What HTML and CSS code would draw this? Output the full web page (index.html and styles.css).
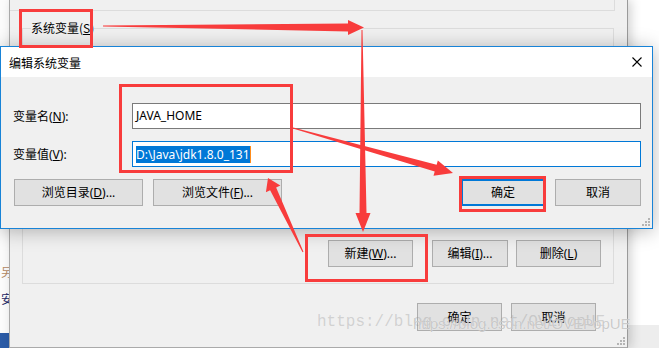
FILE: index.html
```html
<!DOCTYPE html>
<html lang="zh-CN">
<head>
    <meta charset="UTF-8">
    <meta name="viewport" content="width=device-width, initial-scale=1.0">
    <title>编辑系统变量</title>
    <link rel="stylesheet" href="styles.css">
</head>
<body>

    <!-- janela atrás, à esquerda (só um pedaço aparece) -->
    <div class="desk-left">
        <span class="peek peek-orange">另</span>
        <span class="peek peek-navy">安</span>
        <span class="taskbar"></span>
    </div>
    <div class="desk-corner"></div>

    <!-- janela "环境变量" -->
    <div class="env-window">
        <div class="group-upper"></div>
        <div class="group-system">
            <span class="group-title">系统变量(<u>S</u>)</span>
            <div class="btn-row group-buttons">
                <button class="btn btn-new">新建(<u>W</u>)...</button>
                <button class="btn btn-edit">编辑(<u>I</u>)...</button>
                <button class="btn btn-del">删除(<u>L</u>)</button>
            </div>
        </div>
        <div class="btn-row footer-buttons">
            <button class="btn btn-footer">确定</button>
            <button class="btn btn-footer">取消</button>
        </div>
        <svg class="grip grip-env" width="8" height="8" viewBox="0 0 8 8">
            <rect x="6" y="0" width="2" height="2"/>
            <rect x="3" y="3" width="2" height="2"/><rect x="6" y="3" width="2" height="2"/>
            <rect x="0" y="6" width="2" height="2"/><rect x="3" y="6" width="2" height="2"/><rect x="6" y="6" width="2" height="2"/>
        </svg>
    </div>

    <!-- diálogo da frente -->
    <div class="dialog">
        <div class="titlebar">
            <span class="title">编辑系统变量</span>
            <span class="close-btn">
                <svg width="10" height="10" viewBox="0 0 10 10">
                    <path d="M0.5 0.5 L9.5 9.5 M9.5 0.5 L0.5 9.5" stroke="#000" stroke-width="1.1" fill="none"/>
                </svg>
            </span>
        </div>
        <div class="dialog-body">
            <div class="field-row">
                <label for="nome">变量名(<u>N</u>):</label>
                <div class="input" id="nome">JAVA_HOME</div>
            </div>
            <div class="field-row">
                <label for="valor">变量值(<u>V</u>):</label>
                <div class="input input-focus" id="valor"><span class="selected">D:\Java\jdk1.8.0_131</span><span class="caret"></span></div>
            </div>
            <div class="btn-row dialog-buttons">
                <button class="btn btn-browse">浏览目录(<u>D</u>)...</button>
                <button class="btn btn-browse">浏览文件(<u>F</u>)...</button>
                <span class="spacer"></span>
                <button class="btn btn-ok">确定</button>
                <button class="btn btn-cancel">取消</button>
            </div>
        </div>
        <svg class="grip grip-dialog" width="8" height="8" viewBox="0 0 8 8">
            <rect x="6" y="0" width="2" height="2"/>
            <rect x="3" y="3" width="2" height="2"/><rect x="6" y="3" width="2" height="2"/>
            <rect x="0" y="6" width="2" height="2"/><rect x="3" y="6" width="2" height="2"/><rect x="6" y="6" width="2" height="2"/>
        </svg>
    </div>

    <!-- marca d'água -->
    <div class="watermark wm-mono">https://blog.csdn.net/OVEPopUE</div>
    <div class="watermark wm-sans">https://blog.csdn.net/OVEPopUE</div>

    <!-- anotações em vermelho -->
    <svg class="marks" width="659" height="348" viewBox="0 0 659 348">
        <rect class="mark-box" x="20.5" y="10.5" width="71" height="36"/>
        <rect class="mark-box" x="120.5" y="85.5" width="171" height="86"/>
        <rect class="mark-box" x="460.5" y="177.5" width="84" height="33"/>
        <rect class="mark-box" x="306.5" y="235.5" width="120" height="45"/>
        <polygon class="mark-arrow" points="103,25.5 348,23.5 348,20 364,27.5 348,35 348,31.5 103,26.5"/>
        <polygon class="mark-arrow" points="361.5,30 359.5,213 355.5,213 363,232 370.5,213 366.5,213 362.5,30"/>
        <polygon class="mark-arrow" points="293.14,127.52 436.62,164.76 437.84,160.43 453,173 433.5,175.83 434.72,171.5 292.86,128.48"/>
        <polygon class="mark-arrow" points="303.45,251.79 276.14,187.57 280.36,185.43 268,178 265.9,192.27 270.12,190.13 302.55,252.21"/>
    </svg>

</body>
</html>
```

FILE: styles.css
```css
body {
    font-family: "Noto Sans", "Noto Sans CJK SC", sans-serif;
    font-size: 12px;
    color: #000;
    background-color: #fff;
    margin: 0;
    width: 659px;
    height: 348px;
    position: relative;
    overflow: hidden;
}
u {
    text-decoration: underline;
    text-underline-offset: 1px;
}
/* Pedaço da janela de trás */
.desk-left {
    position: absolute;
    left: 0;
    top: 0;
    width: 9px;
    height: 348px;
    overflow: hidden;
    background-color: #fbfbfb;
    display: flex;
    flex-direction: column;
    padding-top: 265px;
    box-sizing: border-box;
}
.peek {
    display: block;
    font-family: "Noto Sans CJK SC", sans-serif;
    line-height: 14px;
    margin-left: 1px;
    white-space: nowrap;
}
.peek-orange {
    color: #b58a66;
}
.peek-navy {
    color: #1c2766;
    margin-top: 13px;
}
.taskbar {
    margin-top: auto;
    height: 15px;
    background-color: #2b5ba6;
}
.desk-corner {
    position: absolute;
    left: 627px;
    top: 325px;
    width: 32px;
    height: 23px;
    background-color: #ededed;
}
/* Janela de variáveis de ambiente */
.env-window {
    position: absolute;
    left: 9px;
    top: 0;
    width: 619px;
    height: 348px;
    box-sizing: border-box;
    background-color: #f0f0f0;
    border-left: 1px solid #a9a9a9;
    border-right: 1px solid #9a9a9a;
    border-bottom: 1px solid #aaa;
    box-shadow: 3px 0 10px rgba(0,0,0,0.18);
}
.group-upper {
    width: 604px;
    height: 10px;
    border-right: 1px solid #dcdcdc;
    border-bottom: 1px solid #dcdcdc;
}
.group-system {
    margin: 17px 0 0 12px;
    width: 592px;
    box-sizing: border-box;
    border: 1px solid #dcdcdc;
    padding: 0 12px 16px 0;
}
.group-title {
    display: block;
    width: max-content;
    margin: -9px 0 0 8px;
    line-height: 16px;
    background-color: #f0f0f0;
    font-family: "Noto Sans CJK SC", sans-serif;
}
.btn-row {
    display: flex;
    align-items: center;
}
.group-buttons {
    justify-content: flex-end;
    margin-top: 204px;
}
.btn {
    font-family: "Noto Sans", "Noto Sans CJK SC", sans-serif;
    font-size: 12px;
    height: 27px;
    padding: 0;
    background-color: #e1e1e1;
    border: 1px solid #adadad;
    color: #000;
    box-sizing: border-box;
    line-height: 25px;
}
.btn-new {
    width: 85px;
    margin-right: 19px;
}
.btn-edit {
    width: 76px;
    margin-right: 8px;
}
.btn-del {
    width: 85px;
}
.footer-buttons {
    justify-content: flex-end;
    margin-top: 19px;
    padding-right: 31px;
    gap: 9px;
}
.btn-footer {
    width: 85px;
    height: 28px;
}
.grip {
    position: absolute;
    fill: #b4b4b4;
}
.grip-env {
    right: 2px;
    bottom: 2px;
}
.grip-dialog {
    right: 2px;
    bottom: 2px;
}
/* Diálogo da frente */
.dialog {
    position: absolute;
    left: 0;
    top: 46px;
    width: 653px;
    height: 183px;
    box-sizing: border-box;
    border: 1px solid #1883d7;
    background-color: #f0f0f0;
    box-shadow: 0 2px 18px rgba(0,0,0,0.28);
    display: flex;
    flex-direction: column;
}
.titlebar {
    height: 30px;
    background-color: #fff;
    display: flex;
    align-items: center;
    justify-content: space-between;
    padding-left: 8px;
}
.title {
    font-family: "Noto Sans CJK SC", sans-serif;
    line-height: 30px;
    padding-top: 1px;
}
.close-btn {
    width: 30px;
    height: 30px;
    display: flex;
    align-items: center;
    justify-content: center;
}
.dialog-body {
    padding: 26px 11px 0 12px;
}
.field-row {
    display: flex;
    align-items: center;
    margin-bottom: 12px;
}
.field-row label {
    width: 119px;
    flex-shrink: 0;
}
.input {
    flex: 1;
    height: 26px;
    box-sizing: border-box;
    border: 1px solid #7a7a7a;
    background-color: #fff;
    padding: 0 3px;
    line-height: 24px;
    display: flex;
    align-items: center;
}
.input-focus {
    border-color: #0078d7;
}
.selected {
    background-color: #0078d7;
    color: #fff;
    line-height: 17px;
}
.caret {
    width: 1px;
    height: 17px;
    background-color: #ff8c1a;
}
.dialog-buttons {
    margin-top: 5px;
    padding-left: 1px;
    gap: 10px;
}
.btn-browse {
    width: 129px;
}
.spacer {
    flex: 1;
}
.btn-ok {
    width: 84px;
    border: 2px solid #0078d7;
    line-height: 23px;
}
.btn-cancel {
    width: 86px;
}
/* Marca d'água */
.watermark {
    position: absolute;
    white-space: nowrap;
    pointer-events: none;
}
.wm-mono {
    left: 317px;
    top: 313px;
    font-family: "Liberation Mono", monospace;
    font-size: 16px;
    color: rgba(150,150,150,0.35);
}
.wm-sans {
    left: 413px;
    top: 315px;
    font-family: "Liberation Sans", sans-serif;
    font-size: 15px;
    color: rgba(160,160,160,0.55);
    text-shadow: 0 0 1px #fff;
}
/* Anotações */
.marks {
    position: absolute;
    left: 0;
    top: 0;
    pointer-events: none;
}
.mark-box {
    fill: none;
    stroke: #f83c3c;
    stroke-width: 3;
}
.mark-arrow {
    fill: #f83c3c;
}
```
